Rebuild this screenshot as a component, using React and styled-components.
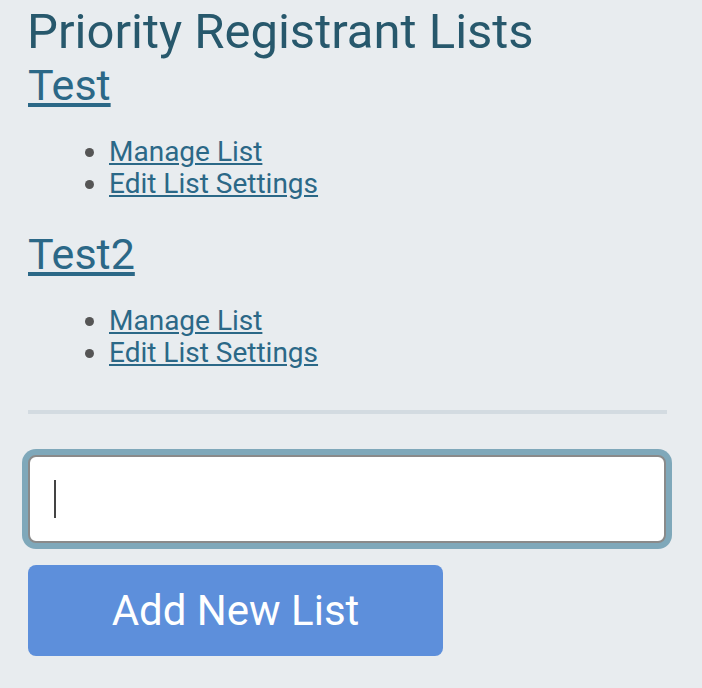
import React from 'react';
import styled, { createGlobalStyle } from 'styled-components';

const lists = [
  { id: 1, name: 'Test' },
  { id: 2, name: 'Test2' },
];

const App = () => {
  return (
    <>
      <GlobalStyle />
      <Page>
        <PageTitle>Priority Registrant Lists</PageTitle>
        {lists.map((list) => (
          <ListGroup key={list.id}>
            <ListName href="#">{list.name}</ListName>
            <ActionList>
              <ActionItem>
                <ActionLink href="#">Manage List</ActionLink>
              </ActionItem>
              <ActionItem>
                <ActionLink href="#">Edit List Settings</ActionLink>
              </ActionItem>
            </ActionList>
          </ListGroup>
        ))}
        <Divider />
        <NewListForm onSubmit={(e) => e.preventDefault()}>
          <InputWrap>
            <NameInput type="text" autoFocus />
            <Caret />
          </InputWrap>
          <AddButton type="submit">Add New List</AddButton>
        </NewListForm>
      </Page>
    </>
  );
};

const GlobalStyle = createGlobalStyle`
  html, body {
    margin: 0;
    background-color: #e8ecef;
    font-family: Roboto, 'Liberation Sans', sans-serif;
  }
`;

const Page = styled.main`
  width: 639px;
  padding: 3px 0 32px 28px;
`;

const PageTitle = styled.h1`
  margin: 0 0 0 -1px;
  font-size: 49px;
  font-weight: 400;
  line-height: normal;
  color: #27586c;
`;

const ListGroup = styled.section`
  display: flex;
  flex-direction: column;
  align-items: flex-start;
`;

const ListName = styled.a`
  font-size: 43px;
  line-height: normal;
  color: #2b6887;
`;

const ActionList = styled.ul`
  margin: 26px 0 29px;
  padding-left: 81px;
  color: #555;
`;

const ActionItem = styled.li`
  font-size: 28px;
  line-height: 32px;
`;

const ActionLink = styled.a`
  color: #2b6887;
`;

const Divider = styled.hr`
  margin: 12px 0 0;
  height: 4px;
  border: none;
  background-color: #d3dbe1;
`;

const NewListForm = styled.form`
  display: flex;
  flex-direction: column;
  align-items: flex-start;
  gap: 22px;
  margin-top: 41px;
`;

const InputWrap = styled.div`
  position: relative;
`;

const NameInput = styled.input`
  display: block;
  box-sizing: border-box;
  width: 638px;
  height: 88px;
  padding: 0 24px;
  border: 2px solid #8a8a8a;
  border-radius: 8px;
  background: #fff;
  font-family: Roboto, 'Liberation Sans', sans-serif;
  font-size: 32px;
  color: #333;
  caret-color: transparent;

  &:focus {
    outline: none;
    box-shadow: 0 0 0 6px #7fa8ba;
  }
`;

const Caret = styled.span`
  position: absolute;
  left: 26px;
  top: 25px;
  width: 2px;
  height: 38px;
  background: #444;
  pointer-events: none;
`;

const AddButton = styled.button`
  width: 415px;
  height: 91px;
  border: none;
  border-radius: 8px;
  background-color: #5d8fdb;
  color: #fff;
  font-family: Roboto, 'Liberation Sans', sans-serif;
  font-size: 42px;
  cursor: pointer;
`;

export default App;
